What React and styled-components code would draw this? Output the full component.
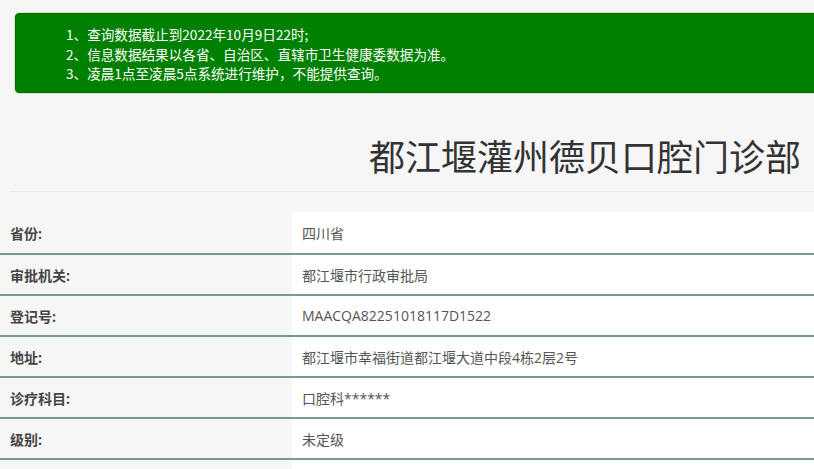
import React from "react"
import styled, { createGlobalStyle } from "styled-components"

const GlobalStyle = createGlobalStyle`
  html, body {
    margin: 0;
    padding: 0;
    background: #f6f6f6;
    overflow: hidden;
  }
  body {
    font-family: "Open Sans", "Noto Sans CJK SC", sans-serif;
  }
`

const Page = styled.div`
  width: 814px;
  padding-top: 13px;
`

const Notice = styled.div`
  margin-left: 15px;
  margin-right: -20px;
  height: 80px;
  box-sizing: border-box;
  background-color: #008000;
  border: 1px solid #0a6a0a;
  box-shadow: 0 0 0 1px #cfe8c4;
  border-radius: 4px;
  padding: 11px 0 0 50px;
  color: #fff;
  font-family: "Noto Sans CJK SC", sans-serif;
  font-size: 13.6px;
  line-height: 19.5px;
  ul {
    margin: 0;
    padding: 0;
    list-style-type: none;
  }
`

const Title = styled.h1`
  margin: 0;
  padding: 38px 13px 0 0;
  height: 60px;
  text-align: right;
  font-family: "Noto Sans CJK SC", sans-serif;
  font-size: 36px;
  font-weight: 400;
  color: #333;
  line-height: 48px;
`

const Divider = styled.hr`
  margin: 0 0 20px 10px;
  border: none;
  border-top: 1px solid #e9e9e9;
`

const Table = styled.div`
  display: flex;
  flex-direction: column;
`

const Row = styled.div`
  display: grid;
  grid-template-columns: 292px 1fr;
  height: 41px;
  box-sizing: border-box;
  border-top: ${(p) => (p.first ? "none" : "2px solid #789a8f")};
  font-size: 14px;
`

const Label = styled.div`
  display: flex;
  align-items: center;
  padding-left: 10px;
  font-weight: 700;
  color: #444;
`

const Value = styled.div`
  display: flex;
  align-items: center;
  padding-left: 10px;
  background: #fff;
  color: #555;
`

const rows = [
  ["省份:", "四川省"],
  ["审批机关:", "都江堰市行政审批局"],
  ["登记号:", "MAACQA82251018117D1522"],
  ["地址:", "都江堰市幸福街道都江堰大道中段4栋2层2号"],
  ["诊疗科目:", "口腔科******"],
  ["级别:", "未定级"],
  ["", ""],
]

export default function App() {
  return (
    <Page>
      <GlobalStyle />
      <Notice>
        <ul>
          <li>1、查询数据截止到2022年10月9日22时;</li>
          <li>2、信息数据结果以各省、自治区、直辖市卫生健康委数据为准。</li>
          <li>3、凌晨1点至凌晨5点系统进行维护，不能提供查询。</li>
        </ul>
      </Notice>
      <Title>都江堰灌州德贝口腔门诊部</Title>
      <Divider />
      <Table>
        {rows.map(([label, value], i) => (
          <Row key={i} first={i === 0}>
            <Label>{label}</Label>
            <Value>{value}</Value>
          </Row>
        ))}
      </Table>
    </Page>
  )
}
